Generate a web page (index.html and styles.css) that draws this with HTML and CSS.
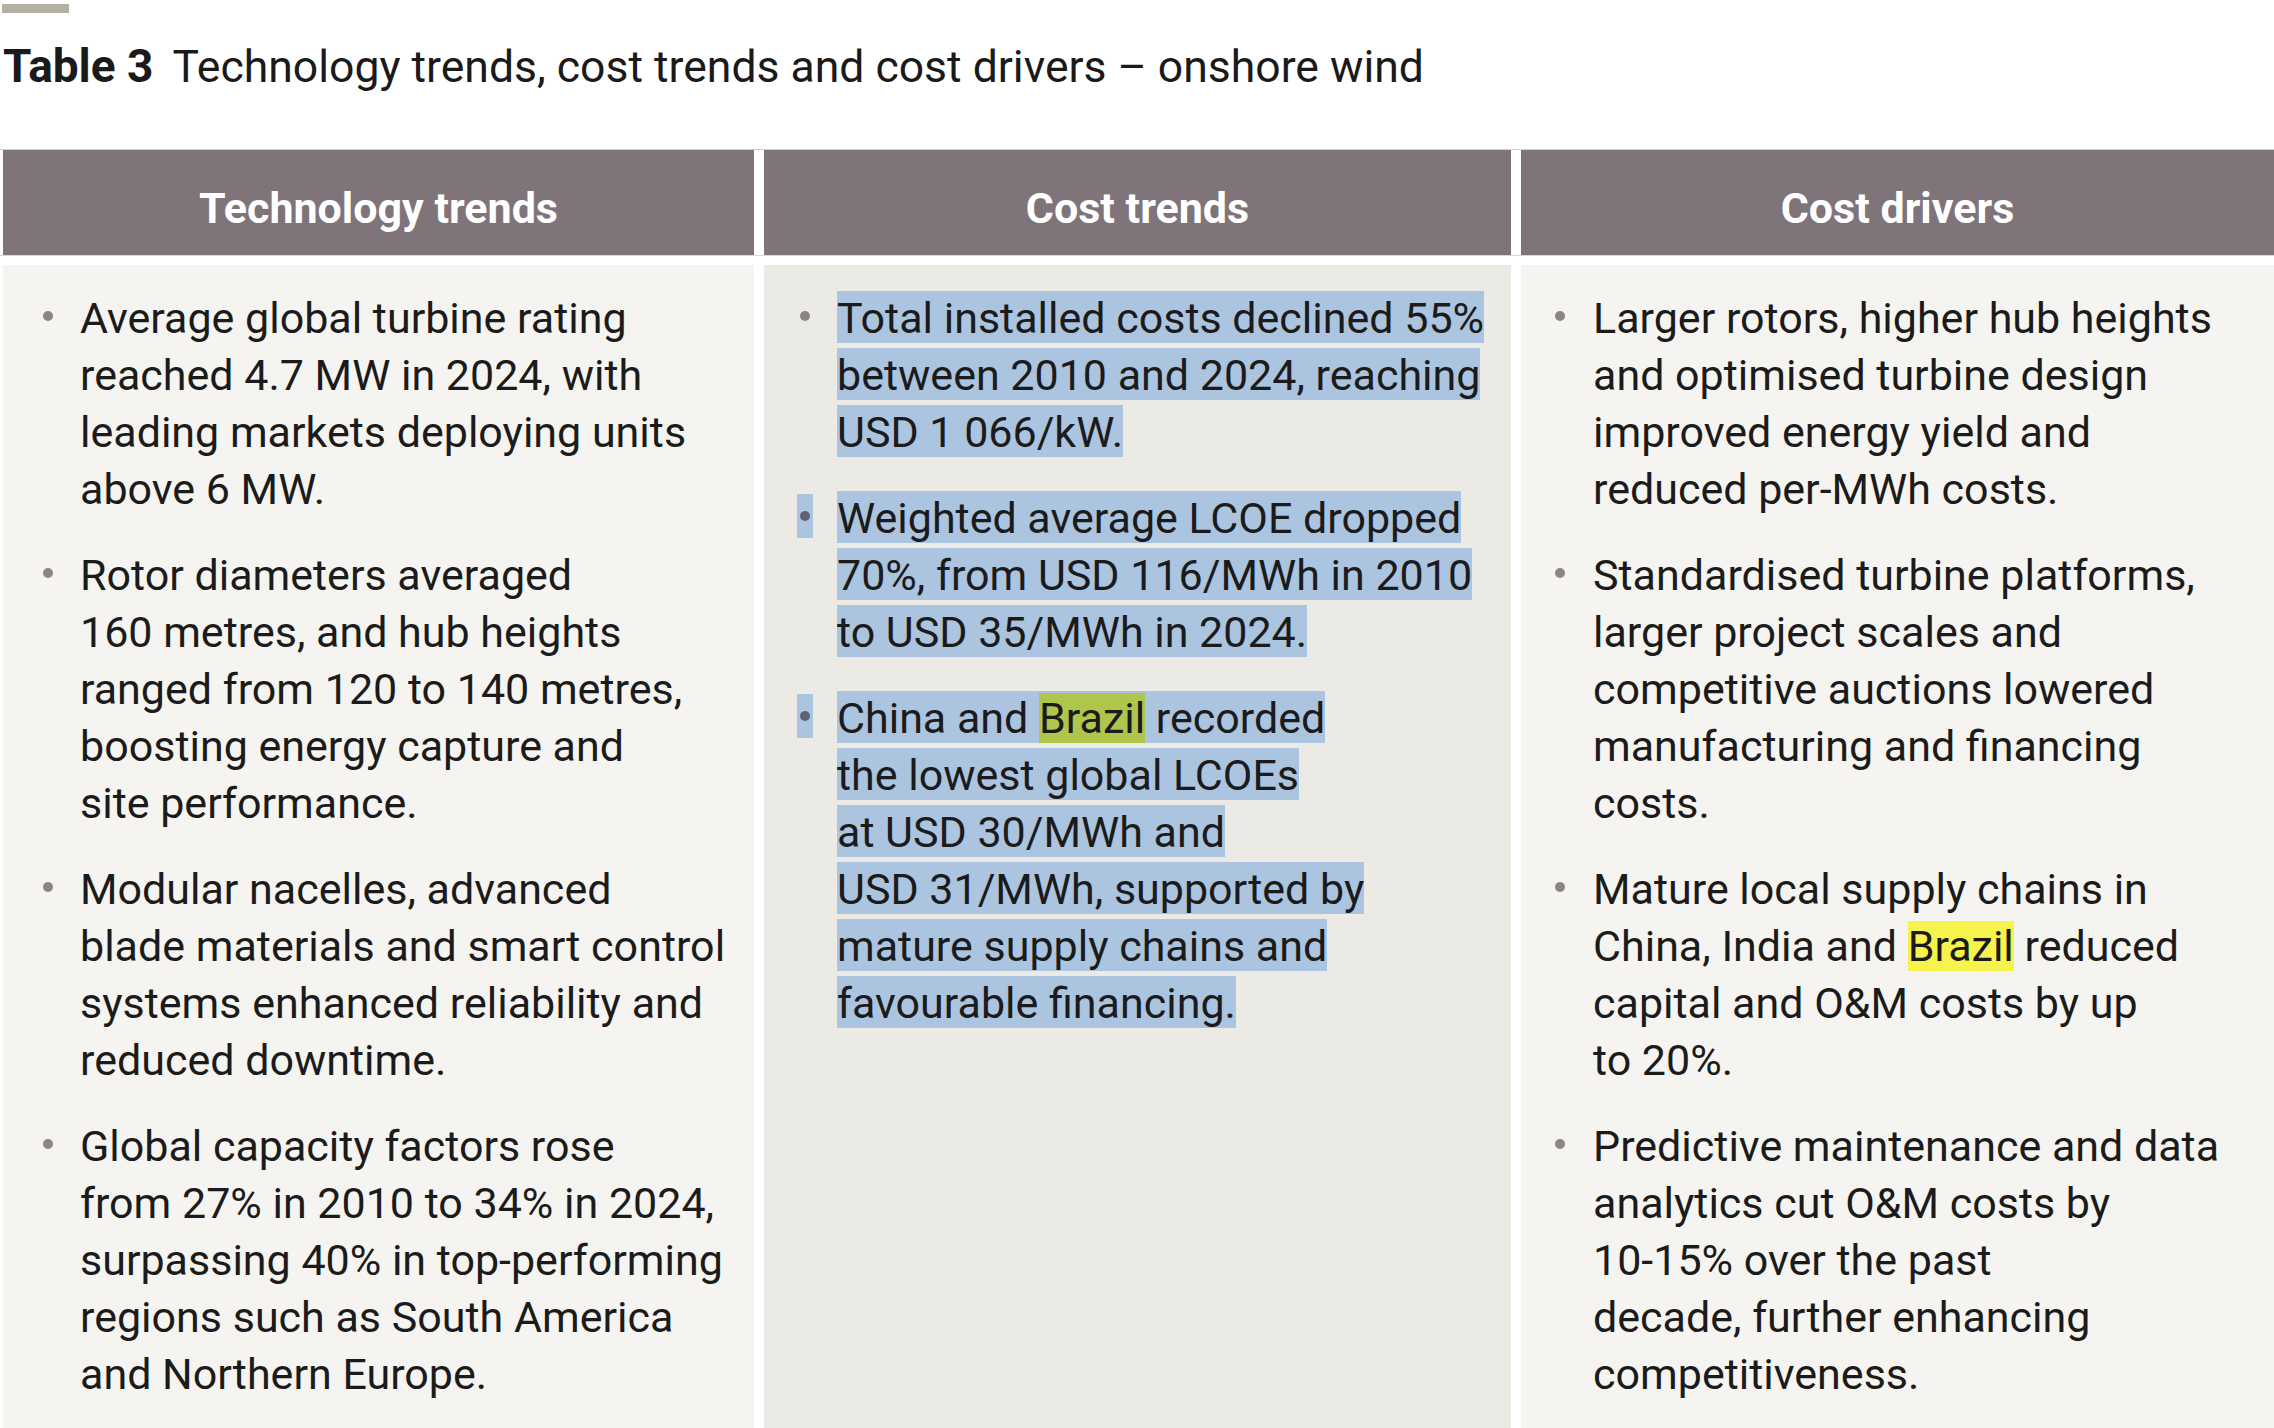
FILE: index.html
```html
<!DOCTYPE html>
<html lang="en">
<head>
<meta charset="utf-8">
<title>Table 3 – onshore wind</title>
<link rel="stylesheet" href="styles.css">
</head>
<body>
<div class="page">
  <div class="rule"></div>
  <h1 class="title"><span class="title-label">Table 3</span><span class="title-text">Technology trends, cost trends and cost drivers – onshore wind</span></h1>
  <div class="table">
    <div class="head-row">
      <div class="head-cell">Technology trends</div>
      <div class="head-cell">Cost trends</div>
      <div class="head-cell">Cost drivers</div>
    </div>
    <div class="body-row">
      <ul class="col col--tech">
        <li class="item"><span class="marker"><span class="bullet"></span></span><span class="text">Average global turbine rating<br>reached 4.7 MW in 2024, with<br>leading markets deploying units<br>above 6 MW.</span></li>
        <li class="item"><span class="marker"><span class="bullet"></span></span><span class="text">Rotor diameters averaged<br>160 metres, and hub heights<br>ranged from 120 to 140 metres,<br>boosting energy capture and<br>site performance.</span></li>
        <li class="item"><span class="marker"><span class="bullet"></span></span><span class="text">Modular nacelles, advanced<br>blade materials and smart control<br>systems enhanced reliability and<br>reduced downtime.</span></li>
        <li class="item"><span class="marker"><span class="bullet"></span></span><span class="text">Global capacity factors rose<br>from 27% in 2010 to 34% in 2024,<br>surpassing 40% in top-performing<br>regions such as South America<br>and Northern Europe.</span></li>
      </ul>
      <ul class="col col--cost">
        <li class="item"><span class="marker"><span class="bullet"></span></span><span class="text"><span class="sel">Total installed costs declined 55%<br>between 2010 and 2024, reaching<br>USD 1 066/kW.</span></span></li>
        <li class="item"><span class="marker"><span class="bullet bullet--sel"></span></span><span class="text"><span class="sel">Weighted average LCOE dropped<br>70%, from USD 116/MWh in 2010<br>to USD 35/MWh in 2024.</span></span></li>
        <li class="item"><span class="marker"><span class="bullet bullet--sel"></span></span><span class="text"><span class="sel">China and <span class="mark-green">Brazil</span> recorded<br>the lowest global LCOEs<br>at USD 30/MWh and<br>USD 31/MWh, supported by<br>mature supply chains and<br>favourable financing.</span></span></li>
      </ul>
      <ul class="col col--drivers">
        <li class="item"><span class="marker"><span class="bullet"></span></span><span class="text">Larger rotors, higher hub heights<br>and optimised turbine design<br>improved energy yield and<br>reduced per-MWh costs.</span></li>
        <li class="item"><span class="marker"><span class="bullet"></span></span><span class="text">Standardised turbine platforms,<br>larger project scales and<br>competitive auctions lowered<br>manufacturing and financing<br>costs.</span></li>
        <li class="item"><span class="marker"><span class="bullet"></span></span><span class="text">Mature local supply chains in<br>China, India and <span class="mark-yellow">Brazil</span> reduced<br>capital and O&amp;M costs by up<br>to 20%.</span></li>
        <li class="item"><span class="marker"><span class="bullet"></span></span><span class="text">Predictive maintenance and data<br>analytics cut O&amp;M costs by<br>10-15% over the past<br>decade, further enhancing<br>competitiveness.</span></li>
      </ul>
    </div>
  </div>
</div>
</body>
</html>
```
FILE: styles.css
```css
html, body {
  margin: 0;
  padding: 0;
  background: #ffffff;
}

body {
  font-family: Roboto, "Liberation Sans", sans-serif;
  color: #1b1b1b;
}

.page {
  box-sizing: border-box;
  height: 1428px;
  padding-top: 4px;
  display: flex;
  flex-direction: column;
  overflow: hidden;
}

.rule {
  flex: 0 0 auto;
  width: 67px;
  height: 9px;
  margin-left: 2px;
  background: #b2b1a1;
}

.title {
  flex: 0 0 auto;
  margin: 30px 0 0 3px;
  font-size: 46px;
  line-height: 46px;
  font-weight: 400;
  white-space: nowrap;
  color: #1a1a1a;
}

.title-label {
  font-weight: 700;
  margin-right: 19px;
}

.title-text {
  font-size: 44.5px;
}

.table {
  margin-top: 59px;
  flex: 1 0 auto;
  display: flex;
  flex-direction: column;
}

.head-row {
  flex: 0 0 auto;
  display: grid;
  grid-template-columns: 751px 747px 753px;
  column-gap: 10px;
  padding-left: 3px;
  border-top: 1px solid #cfcfcf;
  border-bottom: 1px solid #d8d8d8;
}

.head-cell {
  box-sizing: border-box;
  height: 105px;
  padding-top: 12px;
  display: flex;
  align-items: center;
  justify-content: center;
  background: #7e7479;
  color: #ffffff;
  font-size: 43px;
  line-height: 43px;
  font-weight: 700;
}

.body-row {
  flex: 1 0 auto;
  margin-top: 9px;
  display: grid;
  grid-template-columns: 751px 747px 753px;
  column-gap: 10px;
  padding-left: 3px;
}

.col {
  list-style: none;
  margin: 0;
  padding: 25px 0 0 37px;
  background: #f5f4f0;
}

.col--cost {
  background: #ebeae4;
  padding-left: 33px;
}

.col--drivers {
  padding-left: 31px;
}

.item {
  display: flex;
  font-size: 43px;
  line-height: 57px;
  margin-bottom: 29px;
}

.marker {
  flex: 0 0 40px;
  display: flex;
  align-items: flex-start;
}

.col--drivers .marker {
  flex-basis: 41px;
}

.bullet {
  width: 16px;
  height: 44px;
  margin-top: 4px;
  display: flex;
  align-items: center;
  justify-content: center;
}

.bullet::before {
  content: "";
  width: 10px;
  height: 10px;
  border-radius: 50%;
  background: #8b8489;
}

.bullet--sel {
  background: #abc4df;
}

.bullet--sel::before {
  background: #5e6173;
}

.text {
  white-space: nowrap;
}

.sel {
  background: #abc4df;
  padding-top: 2px;
}

.mark-green {
  background: #b0c54b;
}

.mark-yellow {
  background: #f6f34c;
}
```
